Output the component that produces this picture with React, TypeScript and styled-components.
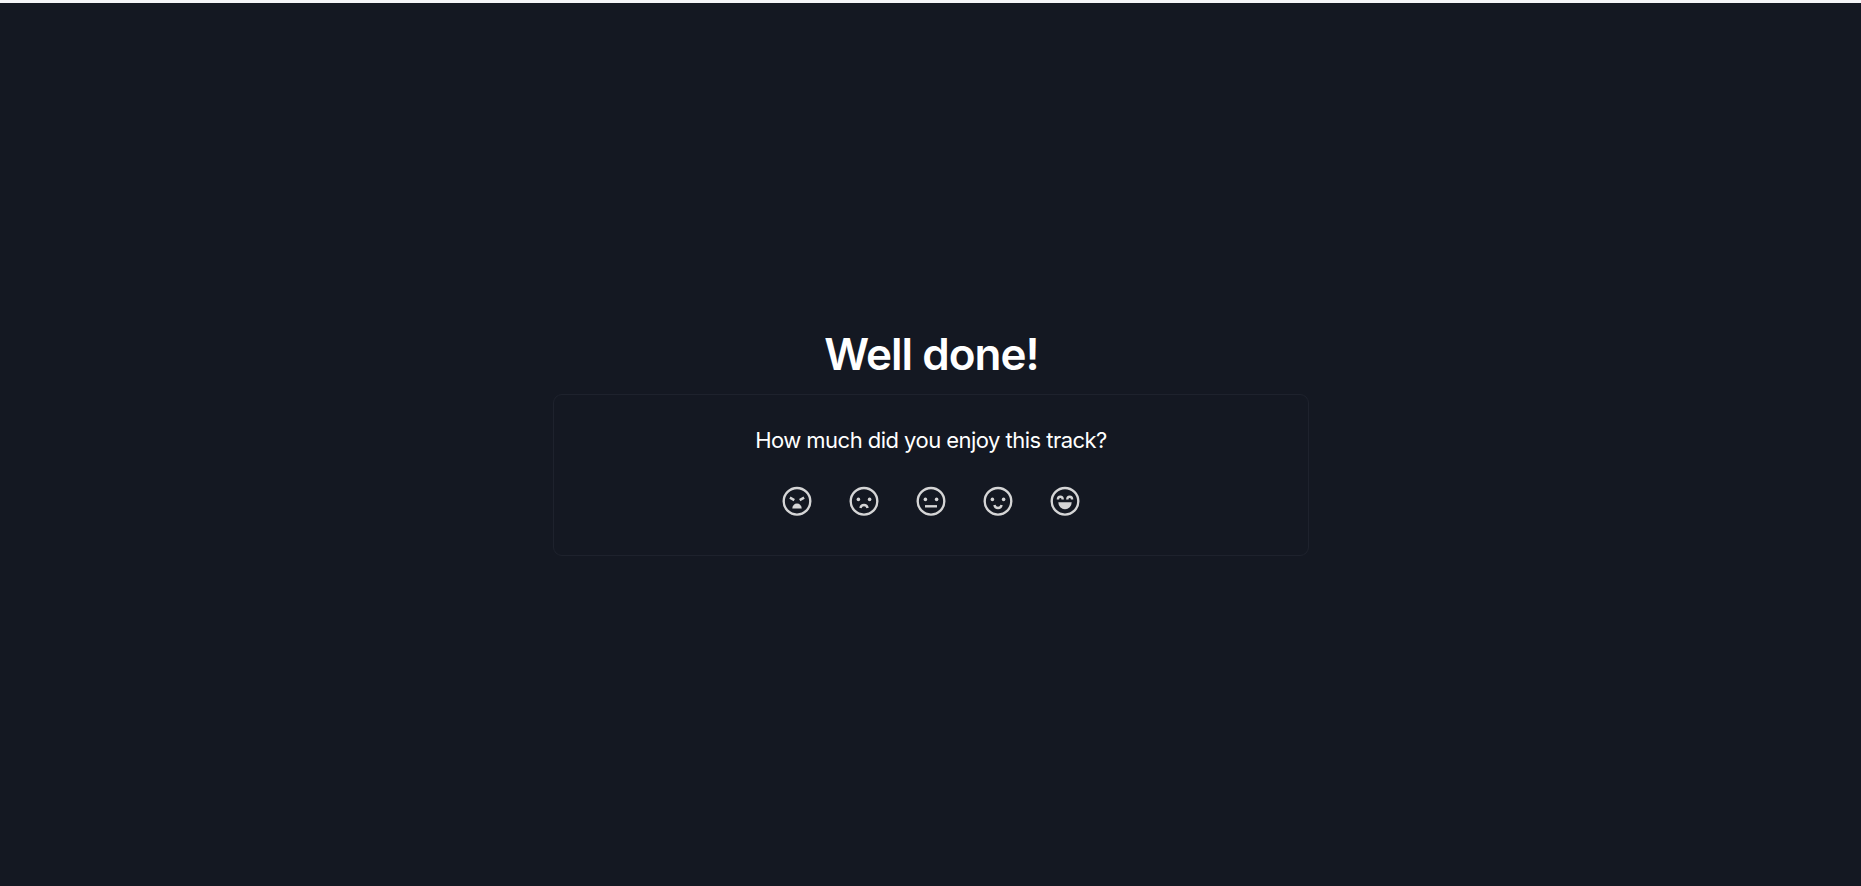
import React from 'react';
import styled, { createGlobalStyle } from 'styled-components';

const GlobalStyle = createGlobalStyle`
  * { box-sizing: border-box; }
  body { margin: 0; background: #141822; }
`;

const Page = styled.main`
  display: flex;
  flex-direction: column;
  align-items: center;
  height: 886px;
  padding-top: 323px;
  overflow: hidden;
  border-top: 3px solid #f4f5f7;
  background: #141822;
  color: #fff;
  font-family: Inter, 'Liberation Sans', sans-serif;
`;

const Title = styled.h1`
  margin: 0;
  height: 68px;
  padding-left: 2px;
  font-size: 44px;
  font-weight: 600;
  line-height: 56px;
  letter-spacing: -0.98px;
  white-space: nowrap;
`;

const Card = styled.section`
  display: flex;
  flex-direction: column;
  align-items: center;
  width: 756px;
  height: 162px;
  padding-top: 29px;
  border: 1px solid #1e222d;
  border-radius: 9px;
`;

const Question = styled.p`
  margin: 0;
  padding-left: 1px;
  font-size: 22px;
  line-height: 32px;
  letter-spacing: -0.53px;
  white-space: nowrap;
`;

const Ratings = styled.div`
  display: flex;
  gap: 35px;
  margin-top: 29px;
`;

const RatingButton = styled.button`
  display: flex;
  width: 32px;
  height: 32px;
  padding: 0;
  border: 0;
  background: none;
  color: #d5d5d6;
  cursor: pointer;
`;

const Dots = () => (
  <g fill="currentColor" stroke="none">
    <circle cx="10.4" cy="14.4" r="1.8" />
    <circle cx="21.6" cy="14.4" r="1.8" />
  </g>
);

const faces: { label: string; drawing: React.ReactNode }[] = [
  {
    label: 'Hated it',
    drawing: (
      <>
        <path d="M8.9 12.7l4.4 2.5M23.1 12.7l-4.4 2.5" strokeWidth="2.5" />
        <path d="M11.3 23.5a4.7 5 0 0 1 9.4 0z" fill="currentColor" stroke="none" />
      </>
    ),
  },
  { label: 'Disliked it', drawing: <><Dots /><path d="M12.4 23a3.7 3.9 0 0 1 7.2 0" /></> },
  { label: 'Neutral', drawing: <><Dots /><path d="M10 21.3h12" /></> },
  { label: 'Liked it', drawing: <><Dots /><path d="M12.4 20a3.7 3.9 0 0 0 7.2 0" /></> },
  {
    label: 'Loved it',
    drawing: (
      <>
        <path d="M8.9 14.4a2.4 2.6 0 0 1 4.8 0M18.3 14.4a2.4 2.6 0 0 1 4.8 0" />
        <path d="M9.3 17.2h13.4a6.7 7 0 0 1-13.4 0z" fill="currentColor" stroke="none" />
      </>
    ),
  },
];

export default function App() {
  return (
    <>
      <GlobalStyle />
      <Page>
        <Title>Well done!</Title>
        <Card>
          <Question>How much did you enjoy this track?</Question>
          <Ratings>
            {faces.map(({ label, drawing }) => (
              <RatingButton key={label} aria-label={label}>
                <svg width="32" height="32" viewBox="0 0 32 32" fill="none" stroke="currentColor" strokeWidth="2.4">
                  <circle cx="16" cy="16.3" r="13.3" />
                  {drawing}
                </svg>
              </RatingButton>
            ))}
          </Ratings>
        </Card>
      </Page>
    </>
  );
}
